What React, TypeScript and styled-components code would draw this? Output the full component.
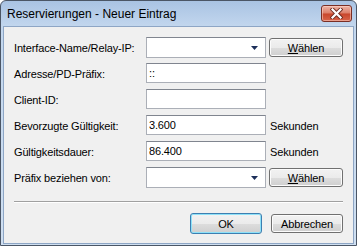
import React from "react";
import styled, { createGlobalStyle } from "styled-components";

const GlobalStyle = createGlobalStyle`
  html, body {
    margin: 0;
    padding: 0;
    background: #ffffff;
  }
  body {
    font-family: "Liberation Sans", Arial, sans-serif;
  }
  * {
    box-sizing: border-box;
  }
`;

const Window = styled.div`
  width: 357px;
  height: 246px;
  display: flex;
  flex-direction: column;
  border: 1px solid #4b5666;
  border-radius: 6px 6px 0 0;
  padding: 0 2px 1px;
  background: linear-gradient(#a9c3e3, #c3d7ee 26px, #cfdff1);
`;

const TitleBar = styled.div`
  height: 25px;
  display: flex;
  align-items: center;
  padding: 0 2px 0 4px;
`;

const Title = styled.div`
  flex: 1;
  font-size: 12px;
  color: #000;
  padding-top: 1px;
`;

const CloseButton = styled.div`
  width: 31px;
  height: 17px;
  border: 1px solid #7a2e24;
  border-radius: 3px;
  display: flex;
  align-items: center;
  justify-content: center;
  background: linear-gradient(#eeb3a5, #dc7d68 48%, #c8452b 52%, #d8644a);
  box-shadow: inset 0 0 0 1px rgba(255, 220, 210, 0.5);
`;

const Client = styled.div`
  flex: 1;
  border: 1px solid #8ea6c5;
  background: #f0f0f0;
  padding: 10px 10px 0 10px;
  display: flex;
  flex-direction: column;
  font-size: 11px;
  letter-spacing: -0.15px;
  color: #000;
`;

const FormGrid = styled.div`
  display: grid;
  grid-template-columns: 129px 120px 74px;
  grid-auto-rows: 21px;
  column-gap: 3px;
  row-gap: 5px;
`;

const Label = styled.div`
  display: flex;
  align-items: center;
  white-space: nowrap;
`;

const Edit = styled.input`
  height: 20px;
  width: 120px;
  align-self: start;
  border: 1px solid #abafb7;
  border-top-color: #80858f;
  background: #fff;
  padding: 0 2px;
  font-family: "Liberation Sans", Arial, sans-serif;
  font-size: 11px;
  letter-spacing: -0.15px;
  color: #000;
  outline: none;
  margin: 0;
`;

const Combo = styled.div`
  height: 21px;
  border: 1px solid #abafb7;
  border-top-color: #80858f;
  background: #fff;
  display: flex;
  align-items: center;
  justify-content: flex-end;
  padding-right: 7px;
`;

const Unit = styled.div`
  display: flex;
  align-items: center;
  padding-left: 1px;
`;

const Button = styled.button<{ $primary?: boolean }>`
  height: ${(p) => (p.$primary ? "21px" : "19px")};
  align-self: center;
  border: 1px solid ${(p) => (p.$primary ? "#3c7fb1" : "#707070")};
  border-radius: 3px;
  background: linear-gradient(#f2f2f2, #ebebeb 50%, #dddddd 51%, #cfcfcf);
  box-shadow: ${(p) =>
    p.$primary ? "inset 0 0 0 1px #8ee1f8" : "inset 0 0 0 1px #fcfcfc"};
  font-family: "Liberation Sans", Arial, sans-serif;
  font-size: 11px;
  letter-spacing: -0.15px;
  color: #000;
  padding: 0;
  margin: 0;
  width: 74px;

  u {
    text-decoration: underline;
  }
`;

const Separator = styled.div`
  margin-top: 13px;
  height: 2px;
  border-top: 1px solid #a0a0a0;
  border-bottom: 1px solid #ffffff;
`;

const ButtonRow = styled.div`
  margin-top: 10px;
  display: flex;
  justify-content: flex-end;
  gap: 9px;

  ${Button} {
    width: 72px;
  }
`;

const DropArrow = () => (
  <svg width="7" height="4" viewBox="0 0 7 4">
    <polygon points="0,0 7,0 3.5,4" fill="#1c2f5a" />
  </svg>
);

const CloseIcon = () => (
  <svg width="13" height="11" viewBox="0 0 13 11">
    <path d="M2.5 1.5 L10.5 9.5 M10.5 1.5 L2.5 9.5" stroke="#6b2a20" strokeWidth="4" strokeLinecap="square" />
    <path d="M2.5 1.5 L10.5 9.5 M10.5 1.5 L2.5 9.5" stroke="#ffffff" strokeWidth="2.2" strokeLinecap="square" />
  </svg>
);

const App = () => {
  return (
    <>
      <GlobalStyle />
      <Window>
        <TitleBar>
          <Title>Reservierungen - Neuer Eintrag</Title>
          <CloseButton>
            <CloseIcon />
          </CloseButton>
        </TitleBar>
        <Client>
          <FormGrid>
            <Label>Interface-Name/Relay-IP:</Label>
            <Combo>
              <DropArrow />
            </Combo>
            <Button>
              <u>W</u>ählen
            </Button>

            <Label>Adresse/PD-Präfix:</Label>
            <Edit defaultValue="::" />
            <div />

            <Label>Client-ID:</Label>
            <Edit defaultValue="" />
            <div />

            <Label>Bevorzugte Gültigkeit:</Label>
            <Edit defaultValue="3.600" />
            <Unit>Sekunden</Unit>

            <Label>Gültigkeitsdauer:</Label>
            <Edit defaultValue="86.400" />
            <Unit>Sekunden</Unit>

            <Label>Präfix beziehen von:</Label>
            <Combo>
              <DropArrow />
            </Combo>
            <Button>
              <u>W</u>ählen
            </Button>
          </FormGrid>
          <Separator />
          <ButtonRow>
            <Button $primary>OK</Button>
            <Button>Abbrechen</Button>
          </ButtonRow>
        </Client>
      </Window>
    </>
  );
};

export default App;
